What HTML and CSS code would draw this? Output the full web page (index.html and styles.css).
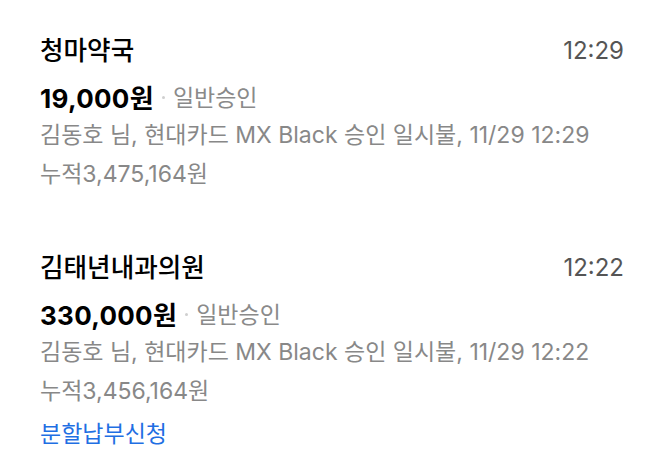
FILE: index.html
```html
<!DOCTYPE html>
<html lang="ko">
<head>
<meta charset="utf-8">
<link rel="stylesheet" href="styles.css">
</head>
<body>
<div class="list">
  <div class="item">
    <div class="row-top">
      <div class="title">청마약국</div>
      <div class="time">12:29</div>
    </div>
    <div class="amount-row"><span class="amount">19,000원</span><span class="dot"></span><span class="type">일반승인</span></div>
    <div class="detail first">김동호 님, 현대카드 MX Black 승인 일시불, 11/29 12:29</div>
    <div class="detail total">누적3,475,164원</div>
  </div>
  <div class="item">
    <div class="row-top">
      <div class="title">김태년내과의원</div>
      <div class="time">12:22</div>
    </div>
    <div class="amount-row"><span class="amount">330,000원</span><span class="dot"></span><span class="type">일반승인</span></div>
    <div class="detail first">김동호 님, 현대카드 MX Black 승인 일시불, 11/29 12:22</div>
    <div class="detail total">누적3,456,164원</div>
    <div class="link">분할납부신청</div>
  </div>
</div>
</body>
</html>
```
FILE: styles.css
```css
html, body {
  margin: 0;
  padding: 0;
  background: #ffffff;
}
body {
  font-family: "Inter", "Noto Sans CJK KR", sans-serif;
  width: 665px;
  height: 469px;
  overflow: hidden;
}
.list {
  padding: 28px 41px 0 40px;
  display: flex;
  flex-direction: column;
  gap: 50px;
}
.item {
  display: flex;
  flex-direction: column;
}
.row-top {
  display: flex;
  justify-content: space-between;
  align-items: center;
  height: 46px;
}
.title {
  font-size: 25.6px;
  font-weight: 500;
  color: #000000;
  line-height: 46px;
}
.time {
  font-size: 24px;
  color: #555555;
  line-height: 46px;
}
.amount-row {
  display: flex;
  align-items: center;
  height: 44px;
}
.amount {
  font-size: 26px;
  font-weight: 700;
  color: #000000;
  letter-spacing: 0.3px;
}
.dot {
  width: 3px;
  height: 3px;
  border-radius: 50%;
  background: #cfcfcf;
  margin: 2px 8px 0 8px;
}
.type {
  font-size: 23px;
  color: #8a8a8a;
}
.detail {
  font-size: 23px;
  color: #888888;
}
.detail.first {
  height: 35px;
  line-height: 35px;
}
.detail.total {
  height: 42px;
  line-height: 42px;
}
.link {
  font-size: 23px;
  color: #1f6fe3;
  height: 44px;
  line-height: 44px;
}
```
